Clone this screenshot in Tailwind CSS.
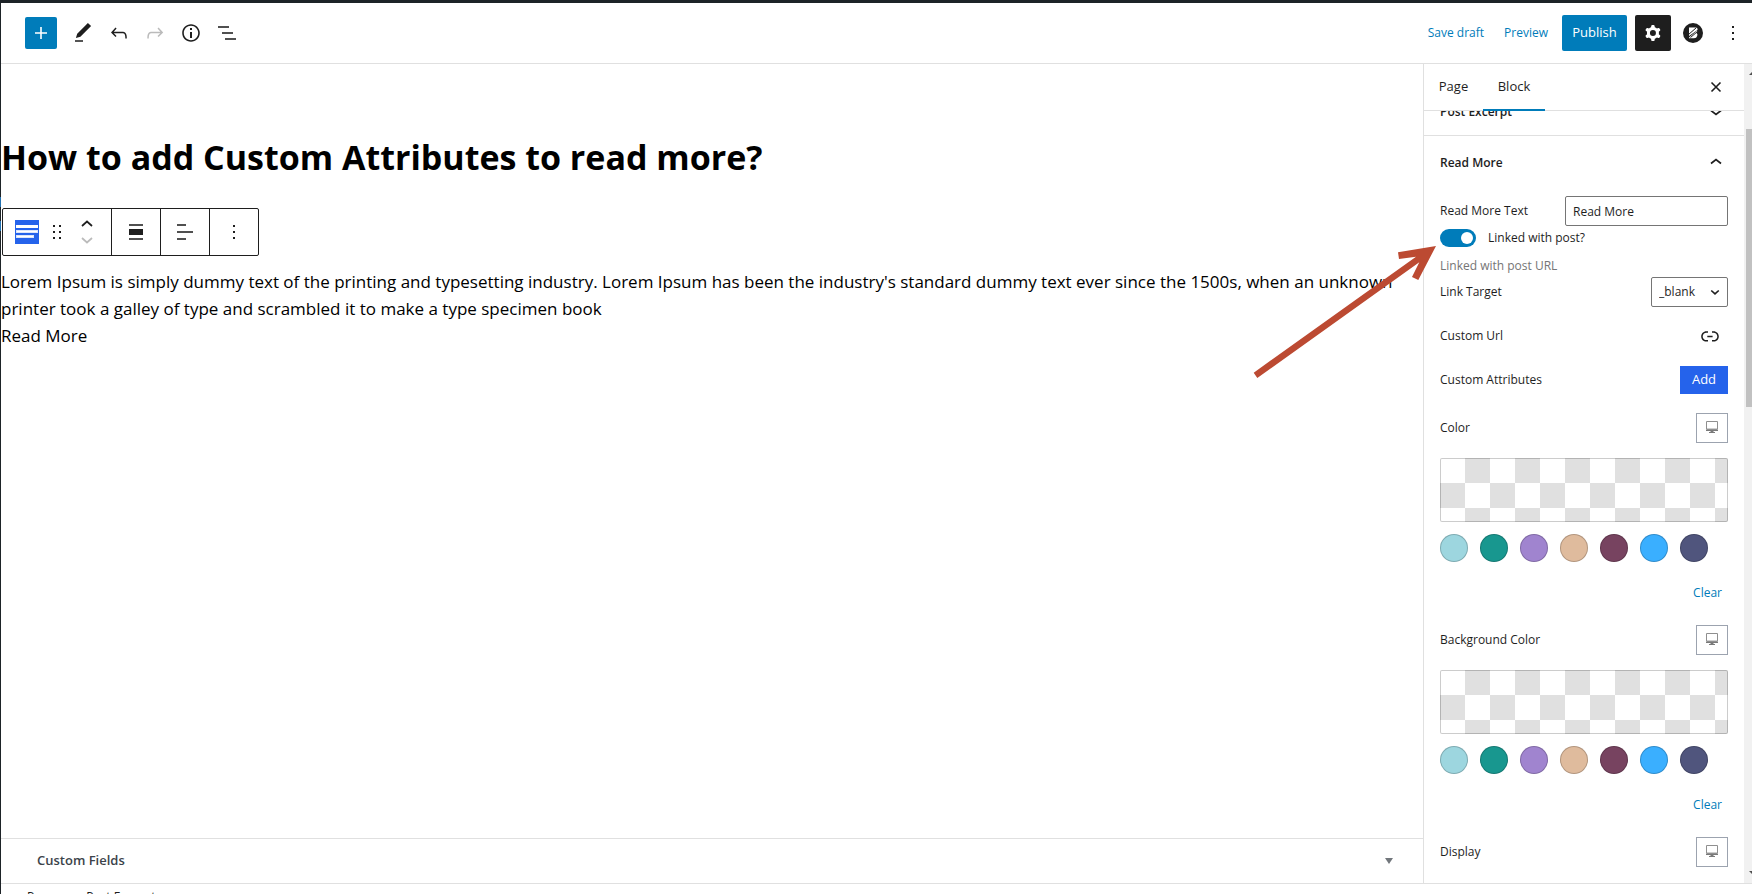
<!DOCTYPE html>
<html lang="en">
<head>
<meta charset="utf-8">
<title>Edit Page</title>
<script src="https://cdn.jsdelivr.net/npm/@tailwindcss/browser@4"></script>
</head>
<body class="h-screen overflow-hidden bg-white font-['Segoe_UI','Open_Sans',sans-serif] text-xs text-[#1e1e1e]">
<div class="relative flex h-full flex-col border-t-3 border-l border-[#1d2327]">

  <header class="flex h-[61px] shrink-0 items-center border-b border-[#e0e0e0] pl-6 pr-[7px]">
    <div class="flex items-center gap-3">
      <button aria-label="Add block" class="flex size-8 items-center justify-center rounded-xs bg-[#007cba] text-white">
        <svg class="size-6" viewBox="0 0 24 24" fill="currentColor"><path d="M18 11.2h-5.2V6h-1.6v5.2H6v1.6h5.2V18h1.6v-5.2H18z"/></svg>
      </button>
      <button aria-label="Tools" class="ml-0.5 flex w-6 justify-center">
        <svg class="size-6" viewBox="0 0 24 24" fill="currentColor"><path d="M20.1 5.1L16.9 2 6.2 12.7l-1.3 4.4 4.5-1.3L20.1 5.1zM4 20.8h8v-1.5H4v1.5z"/></svg>
      </button>
      <button aria-label="Undo" class="flex w-6 justify-center">
        <svg class="size-6" viewBox="0 0 24 24" fill="currentColor"><path d="M18.3 11.7c-.6-.6-1.4-.9-2.3-.9H6.7l2.9-3.3-1.1-1-4.5 5L8.5 16l1-1-2.7-2.7H16c.5 0 .9.2 1.3.5 1 1 1 3.4 1 4.500v.3h1.500v-.2c0-1.500 0-4.300-1.500-5.700z"/></svg>
      </button>
      <button aria-label="Redo" class="flex w-6 justify-center text-[#bbbbbb]">
        <svg class="size-6" viewBox="0 0 24 24" fill="currentColor"><path d="M15.6 6.5l-1.1 1 2.9 3.3H8c-.9 0-1.7.3-2.3.9-1.4 1.5-1.4 4.2-1.4 5.6v.2h1.5v-.3c0-1.1 0-3.5 1-4.5.3-.3.7-.5 1.3-.5h9.2L14.5 15l1.1 1.1 4.6-4.6-4.6-5z"/></svg>
      </button>
      <button aria-label="Details" class="flex w-6 justify-center">
        <svg class="size-6" viewBox="0 0 24 24" fill="currentColor"><path d="M12 3.2c-4.8 0-8.8 3.9-8.8 8.8 0 4.8 3.9 8.8 8.8 8.8 4.8 0 8.8-3.9 8.8-8.8 0-4.8-4-8.8-8.8-8.8zm0 16c-4 0-7.2-3.3-7.2-7.2C4.8 8 8 4.8 12 4.8s7.2 3.3 7.2 7.2c0 4-3.2 7.2-7.2 7.2zM11 17h2v-6h-2v6zm0-8h2V7h-2v2z"/></svg>
      </button>
      <button aria-label="List view" class="flex w-6 justify-center">
        <svg class="size-6" viewBox="0 0 24 24" fill="#505050"><path d="M3 5h11v2H3zM7 11h11v2H7zM10 17h11v2H10z"/></svg>
      </button>
    </div>
    <div class="ml-auto flex items-center">
      <button class="mr-5 text-[#007cba]">Save draft</button>
      <a href="#" class="mr-[14px] text-[#007cba]">Preview</a>
      <button class="h-9 w-[65px] rounded-xs bg-[#007cba] text-[13px] text-white">Publish</button>
      <button aria-label="Settings" class="ml-2 flex size-9 items-center justify-center rounded-xs bg-[#1e1e1e] text-white">
        <svg class="size-6" viewBox="0 0 24 24" fill="currentColor"><path fill-rule="evenodd" d="M10.289 4.836A1 1 0 0111.275 4h1.306a1 1 0 01.987.836l.244 1.466c.787.26 1.503.679 2.108 1.218l1.393-.522a1 1 0 011.216.437l.653 1.13a1 1 0 01-.23 1.273l-1.148.944a6.025 6.025 0 010 2.435l1.149.946a1 1 0 01.23 1.272l-.653 1.13a1 1 0 01-1.216.437l-1.394-.522c-.605.54-1.32.958-2.108 1.218l-.244 1.466a1 1 0 01-.987.836h-1.306a1 1 0 01-.986-.836l-.244-1.466a5.995 5.995 0 01-2.108-1.218l-1.394.522a1 1 0 01-1.217-.436l-.653-1.131a1 1 0 01.23-1.272l1.149-.946a6.026 6.026 0 010-2.435l-1.148-.944a1 1 0 01-.23-1.272l.653-1.131a1 1 0 011.217-.437l1.393.522a5.994 5.994 0 012.108-1.218l.244-1.466zM14.929 12a3 3 0 11-6 0 3 3 0 016 0z"/></svg>
      </button>
      <button aria-label="Block library" class="ml-3 flex size-5 items-center justify-center">
        <svg class="size-5" viewBox="0 0 20 20"><circle cx="10" cy="10" r="10" fill="#1e1e1e"/><path d="M6 4.500h6.500q2.500 0 2 2.500L6 13zM6 14.500L14 7.800q.8 1.200-.5 2.200 1.500 1 .7 3-.7 2.300-3.200 2.300H6z" fill="#fff"/><path d="M5.500 11.500l7.500-6.500M7.500 14.500l7-6" stroke="#1e1e1e" stroke-width="1"/></svg>
      </button>
      <button aria-label="Options" class="ml-[18px] flex size-6 items-center justify-center">
        <svg class="size-6" viewBox="0 0 24 24" fill="currentColor"><path d="M11 5h2v2h-2zM11 11h2v2h-2zM11 17h2v2h-2z"/></svg>
      </button>
    </div>
  </header>

  <div class="flex min-h-0 flex-1">
    <main class="flex min-w-0 flex-1 flex-col">
      <div class="flex-1 pt-[68px] text-black">
        <h1 class="text-[34px] leading-[50px] font-bold">How to add Custom Attributes to read more?</h1>
        <div role="toolbar" aria-label="Block tools" class="mt-[26px] ml-px flex h-12 w-fit divide-x divide-[#1e1e1e] rounded-xs border border-[#1e1e1e]">
          <div class="flex w-[109px] items-center pl-3">
            <button aria-label="Post Excerpt">
              <svg class="size-6" viewBox="0 0 24 24"><path fill="#2563eb" d="M0 0h24v24H0z"/><path fill="#fff" d="M1 5h22v3H1z"/><path fill="#dbe5fc" d="M1 10h22v3H1zM1 15h18v3H1z"/><path fill="#fff" d="M2 11h20v1H2zM2 16h16v1H2z"/></svg>
            </button>
            <button aria-label="Drag" class="ml-[6px]">
              <svg class="size-6" viewBox="0 0 24 24" fill="#1e1e1e"><path d="M8 5h2v2H8zM14 5h2v2h-2zM8 11h2v2H8zM14 11h2v2h-2zM8 17h2v2H8zM14 17h2v2h-2z"/></svg>
            </button>
            <div class="ml-[6px] flex flex-col">
              <button aria-label="Move up"><svg class="h-4 w-6" viewBox="0 4 24 16" fill="none" stroke="#1e1e1e" stroke-width="1.700"><path d="M7 14l5-4.500 5 4.500"/></svg></button>
              <button aria-label="Move down"><svg class="h-4 w-6" viewBox="0 4 24 16" fill="none" stroke="#bbb" stroke-width="1.700"><path d="M7 10l5 4.500 5-4.500"/></svg></button>
            </div>
          </div>
          <button aria-label="Align" class="flex w-[49px] items-center justify-center">
            <svg class="size-6" viewBox="0 0 24 24"><path fill="#505050" d="M5 4h14v2H5zM5 18h14v2H5z"/><path fill="#1e1e1e" d="M5 9h14v6H5z"/></svg>
          </button>
          <button aria-label="Text align" class="flex w-[49px] items-center justify-center">
            <svg class="size-6" viewBox="0 0 24 24" fill="#505050"><path d="M4 4h9v2H4zM4 11h16v2H4zM4 18h9v2H4z"/></svg>
          </button>
          <button aria-label="More options" class="flex w-12 items-center justify-center">
            <svg class="size-6" viewBox="0 0 24 24" fill="#1e1e1e"><path d="M11 5h2v2h-2zM11 11h2v2h-2zM11 17h2v2h-2z"/></svg>
          </button>
        </div>
        <p class="mt-3 pr-7 text-[17px] leading-[27px]">Lorem Ipsum is simply dummy text of the printing and typesetting industry. Lorem Ipsum has been the industry's standard dummy text ever since the 1500s, when an unknown printer took a galley of type and scrambled it to make a type specimen book</p>
        <a href="#" class="text-[17px] leading-[27px]">Read More</a>
      </div>
      <button class="flex h-[45px] shrink-0 items-center justify-between border-t border-[#e0e0e0] pr-[30px] pl-9 text-[13px] font-semibold text-[#3c434a]">
        Custom Fields
        <svg class="h-[6px] w-2" viewBox="0 0 8 6" fill="#72777c"><path d="M0 0h8L4 6z"/></svg>
      </button>
    </main>

    <aside class="flex w-[321px] shrink-0 flex-col border-l border-[#e0e0e0]">
      <div class="flex h-[47px] shrink-0 items-stretch border-b border-[#e0e0e0] pr-4">
        <button class="w-[59px] text-[13px] font-medium">Page</button>
        <button class="-mb-px w-[62px] border-b-2 border-[#007cba] text-[13px]">Block</button>
        <button aria-label="Close settings" class="ml-auto flex w-6 items-center justify-center">
          <svg class="size-6" viewBox="0 0 24 24" fill="none" stroke="#1e1e1e" stroke-width="1.600"><path d="M7.500 7.500l9 9M16.500 7.500l-9 9"/></svg>
        </button>
      </div>
      <div class="min-h-0 flex-1 overflow-hidden">
        <button class="-mt-6 flex h-[49px] w-full items-center justify-between border-b border-[#e0e0e0] px-4 pt-px font-semibold">
          Post Excerpt
          <svg class="size-6" viewBox="0 0 24 24" fill="none" stroke="#1e1e1e" stroke-width="1.700"><path d="M7 10.500l5 4 5-4"/></svg>
        </button>
        <button class="flex h-[52px] w-full items-center justify-between px-4 pt-px font-semibold">
          Read More
          <svg class="size-6" viewBox="0 0 24 24" fill="none" stroke="#1e1e1e" stroke-width="1.700"><path d="M7 12.500l5-4 5 4"/></svg>
        </button>
        <div class="flex flex-col px-4 pt-2">
          <div class="flex items-center justify-between">
            <label for="rm-text">Read More Text</label>
            <input id="rm-text" type="text" value="Read More" class="h-[30px] w-[163px] rounded-xs border border-[#757575] px-[7px]">
          </div>
          <label class="mt-0.5 flex h-5 items-center gap-3">
            <input type="checkbox" checked class="peer sr-only">
            <span class="flex h-[18px] w-9 justify-end rounded-full bg-[#007cba] p-[3px]"><span class="size-3 rounded-full bg-white"></span></span>
            Linked with post?
          </label>
          <p class="mt-2 mb-px h-5 leading-5 text-[#757575]">Linked with post URL</p>
          <div class="flex items-center justify-between">
            <label for="target">Link Target</label>
            <div class="relative">
              <select id="target" class="h-[30px] w-[77px] appearance-none rounded-xs border border-[#757575] bg-white px-[7px]"><option>_blank</option></select>
              <svg class="pointer-events-none absolute top-[6px] right-1 size-[18px]" viewBox="0 0 24 24" fill="none" stroke="#1e1e1e" stroke-width="2.200"><path d="M7 10l5 4.500 5-4.500"/></svg>
            </div>
          </div>
          <div class="mt-[17px] flex items-center justify-between pr-[6px]">
            <span>Custom Url</span>
            <button aria-label="Edit link"><svg class="size-6" viewBox="0 0 24 24" fill="currentColor"><path d="M15.600 7.200H14v1.500h1.600c2 0 3.700 1.700 3.700 3.700s-1.700 3.700-3.700 3.700H14v1.500h1.600c2.800 0 5.200-2.300 5.200-5.200 0-2.900-2.300-5.200-5.200-5.200zM4.700 12.400c0-2 1.700-3.700 3.700-3.700H10V7.200H8.400c-2.900 0-5.200 2.300-5.200 5.200 0 2.900 2.300 5.200 5.200 5.200H10v-1.500H8.400c-2 0-3.700-1.700-3.700-3.700zm4.600.9h5.300v-1.500H9.300v1.500z"/></svg></button>
          </div>
          <div class="mt-[18px] flex items-center justify-between">
            <span>Custom Attributes</span>
            <button class="h-7 w-12 bg-[#2563eb] text-[13px] text-white">Add</button>
          </div>

          <div class="mt-[19px] flex items-center justify-between">
            <span>Color</span>
            <button aria-label="Device for color" class="flex h-[30px] w-8 items-center justify-center border border-[#9ca3af]"><svg class="size-4" viewBox="0 0 16 16"><path d="M2.500 1.500h11v8h-11z" fill="#fff" stroke="#8f8f8f"/><path d="M3 8.500h10" stroke="#cfcfcf"/><path d="M2 10.500h12M5 12.500h6M6.500 11.500h3" stroke="#7a7a7a"/></svg></button>
          </div>
          <button aria-label="Custom color picker" class="mt-[15px] h-16 w-full rounded-xs bg-[repeating-conic-gradient(#fff_0_25%,#e0e0e0_0_50%)] bg-[length:50px_50px] bg-[position:0_-25px] shadow-[inset_0_0_0_1px_rgba(0,0,0,0.2)]"></button>
          <div class="mt-3 flex gap-3">
            <button aria-label="Light teal" class="size-7 rounded-full border border-black/20 bg-[#9dd6df]"></button>
            <button aria-label="Green" class="size-7 rounded-full border border-black/20 bg-[#18978f]"></button>
            <button aria-label="Lavender" class="size-7 rounded-full border border-black/20 bg-[#a084cf]"></button>
            <button aria-label="Tan" class="size-7 rounded-full border border-black/20 bg-[#dfbb9d]"></button>
            <button aria-label="Plum" class="size-7 rounded-full border border-black/20 bg-[#774360]"></button>
            <button aria-label="Sky blue" class="size-7 rounded-full border border-black/20 bg-[#3aafff]"></button>
            <button aria-label="Slate" class="size-7 rounded-full border border-black/20 bg-[#50557d]"></button>
          </div>
          <button class="mt-[21px] mr-[6px] h-5 self-end text-[#007cba]">Clear</button>

          <div class="mt-[22px] flex items-center justify-between">
            <span>Background Color</span>
            <button aria-label="Device for background color" class="flex h-[30px] w-8 items-center justify-center border border-[#9ca3af]"><svg class="size-4" viewBox="0 0 16 16"><path d="M2.500 1.500h11v8h-11z" fill="#fff" stroke="#8f8f8f"/><path d="M3 8.500h10" stroke="#cfcfcf"/><path d="M2 10.500h12M5 12.500h6M6.500 11.500h3" stroke="#7a7a7a"/></svg></button>
          </div>
          <button aria-label="Custom background color picker" class="mt-[15px] h-16 w-full rounded-xs bg-[repeating-conic-gradient(#fff_0_25%,#e0e0e0_0_50%)] bg-[length:50px_50px] bg-[position:0_-25px] shadow-[inset_0_0_0_1px_rgba(0,0,0,0.2)]"></button>
          <div class="mt-3 flex gap-3">
            <button aria-label="Light teal" class="size-7 rounded-full border border-black/20 bg-[#9dd6df]"></button>
            <button aria-label="Green" class="size-7 rounded-full border border-black/20 bg-[#18978f]"></button>
            <button aria-label="Lavender" class="size-7 rounded-full border border-black/20 bg-[#a084cf]"></button>
            <button aria-label="Tan" class="size-7 rounded-full border border-black/20 bg-[#dfbb9d]"></button>
            <button aria-label="Plum" class="size-7 rounded-full border border-black/20 bg-[#774360]"></button>
            <button aria-label="Sky blue" class="size-7 rounded-full border border-black/20 bg-[#3aafff]"></button>
            <button aria-label="Slate" class="size-7 rounded-full border border-black/20 bg-[#50557d]"></button>
          </div>
          <button class="mt-[21px] mr-[6px] h-5 self-end text-[#007cba]">Clear</button>

          <div class="mt-[22px] flex items-center justify-between">
            <span>Display</span>
            <button aria-label="Device for display" class="flex h-[30px] w-8 items-center justify-center border border-[#9ca3af]"><svg class="size-4" viewBox="0 0 16 16"><path d="M2.500 1.500h11v8h-11z" fill="#fff" stroke="#8f8f8f"/><path d="M3 8.500h10" stroke="#cfcfcf"/><path d="M2 10.500h12M5 12.500h6M6.500 11.500h3" stroke="#7a7a7a"/></svg></button>
          </div>
        </div>
      </div>
    </aside>

    <!-- scrollbar, cut by the window's right edge -->
    <div class="flex w-2 shrink-0 flex-col overflow-hidden bg-[#f1f1f1] pl-[2px]">
      <svg class="mt-[7px] ml-[3px] h-1 w-2 shrink-0" viewBox="0 0 8 4" fill="#505050"><path d="M0 4L4 0l4 4z"/></svg>
      <div class="mt-[54px] h-[278px] w-full shrink-0 bg-[#c1c1c1]"></div>
      <svg class="mt-auto mb-2 ml-[3px] h-1 w-2 shrink-0" viewBox="0 0 8 4" fill="#505050"><path d="M0 0l4 4 4-4z"/></svg>
    </div>
  </div>

  <footer class="h-[11px] shrink-0 overflow-hidden border-t border-[#e0e0e0] pt-[5px] pl-[26px]">
    <nav aria-label="Block breadcrumb" class="flex gap-[10px] leading-4"><a href="#">Page</a><span>→</span><a href="#">Post Excerpt</a></nav>
  </footer>

  <!-- selection marks on the left edge -->
  <span class="absolute top-[194px] -left-px h-[10px] w-px bg-[#2271b1]"></span>
  <span class="absolute top-[218px] -left-px h-[10px] w-px bg-[#2271b1]"></span>

  <!-- annotation arrow -->
  <svg class="pointer-events-none absolute top-[241px] right-[315px] h-[138px] w-[186px]" viewBox="0 0 186 138" fill="#bc4a32"><path d="M2.700 128.700L165 12.700 148 15l-1-6.700L185 2l-17.700 34-6.300-3 7.300-14.700L6.300 134z"/></svg>
</div>
</body>
</html>
